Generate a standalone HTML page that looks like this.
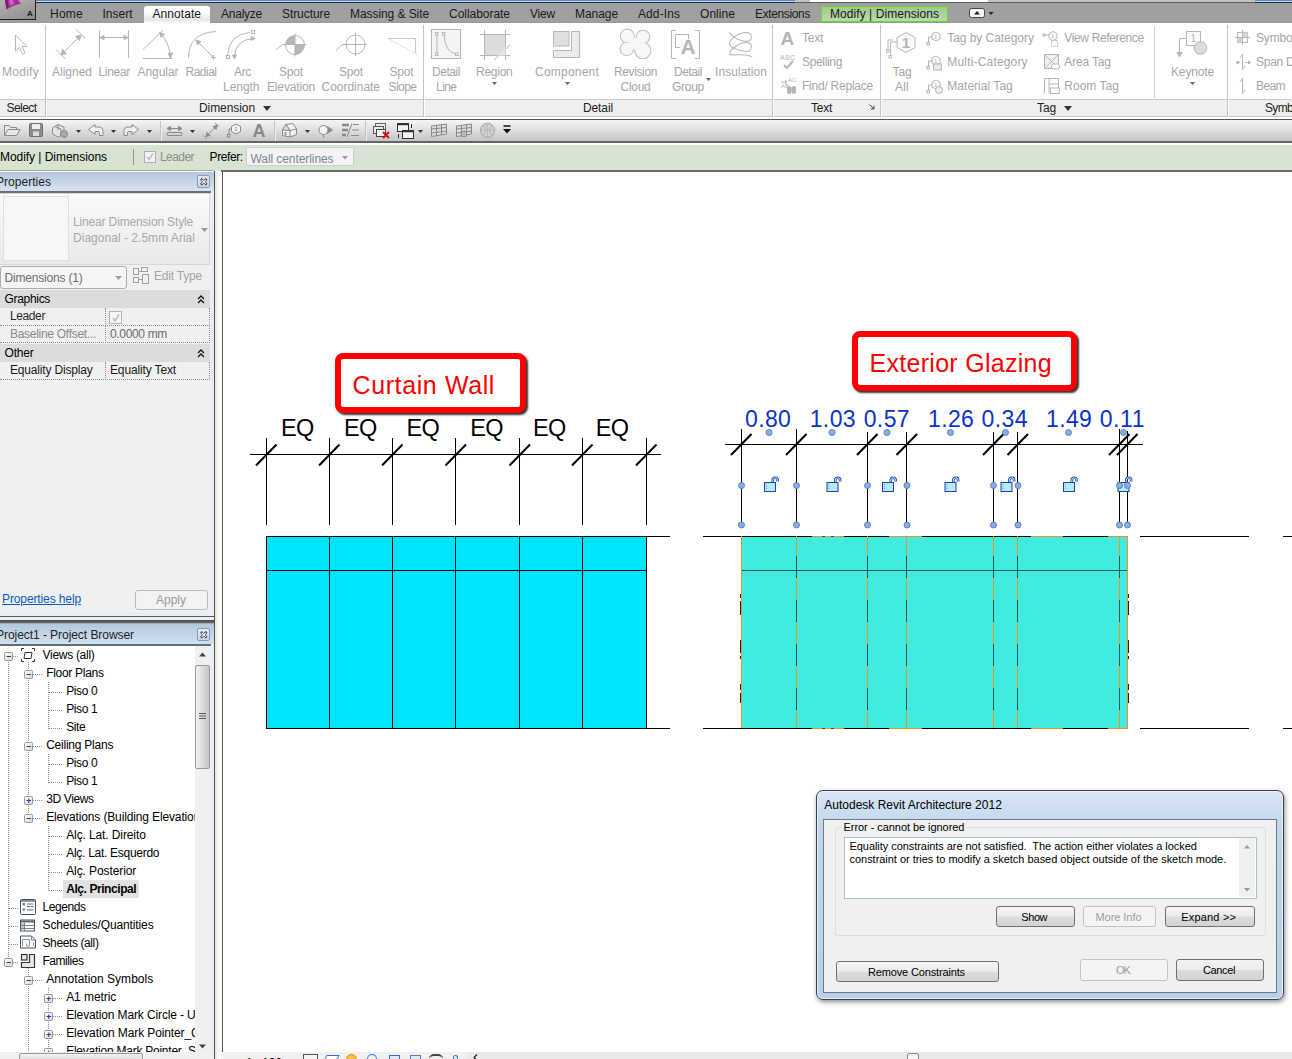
<!DOCTYPE html>
<html><head><meta charset="utf-8"><title>Revit</title>
<style>
html,body{margin:0;padding:0}
body{width:1292px;height:1059px;overflow:hidden;position:relative;background:#fff;font-family:"Liberation Sans",sans-serif;}
.r{position:absolute;display:block}
.t{position:absolute;white-space:nowrap;font-family:"Liberation Sans",sans-serif;}
</style></head><body>
<div class="r" style="left:0px;top:0px;width:795px;height:3px;background:linear-gradient(#5a7eb8 0,#6a8cc2 33%,#c6d8ee 34%,#c6d8ee 62%,#1c2c4c 70%);"></div>
<div class="r" style="left:795px;top:0px;width:460px;height:3px;background:linear-gradient(#c2c2c2 62%,#5e5e5e 70%);"></div>
<div class="r" style="left:810px;top:0px;width:178px;height:2.3px;background:#ffffff;"></div>
<div class="r" style="left:1255px;top:0px;width:37px;height:3px;background:linear-gradient(#5a7eb8 0,#6a8cc2 33%,#c6d8ee 34%,#c6d8ee 62%,#1c2c4c 70%);"></div>
<div class="r" style="left:0px;top:2.7px;width:1292px;height:20.3px;background:#a0a0a0;"></div>
<div class="r" style="left:0px;top:22px;width:1292px;height:1px;background:#9a9a9a;"></div>
<div class="r" style="left:0px;top:0px;width:36px;height:20px;background:linear-gradient(160deg,#b4b4b4,#8c8c8c);border-right:1.500px solid #222;border-bottom:1.500px solid #222;box-sizing:border-box;"></div>
<svg class="r" style="left:2px;top:0px;" width="22" height="12" viewBox="0 0 22 12"><path d="M3 0 L16 0 L19 3.500 L11 6 L4.500 9.500 Z" fill="#a82c9c"/><path d="M7 0 L8 5.500 L12 4 L11 0Z" fill="#cc5ec4"/><path d="M3 0 L4.500 9.500 L6.500 6 L5.500 0Z" fill="#7a1a72"/></svg>
<div class="t " style="left:27.0px;top:8.0px;font-size:8px;line-height:12px;color:#1a1a1a;font-weight:bold;">A</div>
<div class="r" style="left:0px;top:23px;width:1292px;height:76px;background:#ffffff;"></div>
<div class="r" style="left:0px;top:99px;width:1292px;height:18px;background:#efefef;border-top:1px solid #cacaca;border-bottom:1px solid #c6c6c6;box-sizing:border-box;"></div>
<div class="r" style="left:0px;top:117px;width:1292px;height:2px;background:#ffffff;"></div>
<div class="r" style="left:143.5px;top:6px;width:66.5px;height:17px;background:linear-gradient(#ffffff 0,#fcfcfc 40%,#e6e6e6 82%,#ffffff 100%);border-radius:3px 3px 0 0;"></div>
<div class="r" style="left:821px;top:6px;width:127px;height:16px;background:linear-gradient(#a4c694,#bbd8ad);border:1px solid #58e022;box-sizing:border-box;border-radius:2px;"></div>
<div class="t " style="left:50.0px;top:5.5px;font-size:12px;line-height:16px;color:#1a1a1a;letter-spacing:0.246px;">Home</div>
<div class="t " style="left:102.5px;top:5.5px;font-size:12px;line-height:16px;color:#1a1a1a;letter-spacing:0.000px;">Insert</div>
<div class="t " style="left:152.5px;top:5.5px;font-size:12px;line-height:16px;color:#1a1a1a;letter-spacing:0.061px;">Annotate</div>
<div class="t " style="left:221.0px;top:5.5px;font-size:12px;line-height:16px;color:#1a1a1a;letter-spacing:-0.241px;">Analyze</div>
<div class="t " style="left:282.0px;top:5.5px;font-size:12px;line-height:16px;color:#1a1a1a;letter-spacing:-0.075px;">Structure</div>
<div class="t " style="left:350.0px;top:5.5px;font-size:12px;line-height:16px;color:#1a1a1a;letter-spacing:-0.073px;">Massing &amp; Site</div>
<div class="t " style="left:449.0px;top:5.5px;font-size:12px;line-height:16px;color:#1a1a1a;letter-spacing:-0.034px;">Collaborate</div>
<div class="t " style="left:530.0px;top:5.5px;font-size:12px;line-height:16px;color:#1a1a1a;letter-spacing:-0.199px;">View</div>
<div class="t " style="left:575.0px;top:5.5px;font-size:12px;line-height:16px;color:#1a1a1a;letter-spacing:-0.060px;">Manage</div>
<div class="t " style="left:638.0px;top:5.5px;font-size:12px;line-height:16px;color:#1a1a1a;letter-spacing:0.094px;">Add-Ins</div>
<div class="t " style="left:700.0px;top:5.5px;font-size:12px;line-height:16px;color:#1a1a1a;letter-spacing:0.052px;">Online</div>
<div class="t " style="left:755.0px;top:5.5px;font-size:12px;line-height:16px;color:#1a1a1a;letter-spacing:-0.369px;">Extensions</div>
<div class="t " style="left:830.0px;top:5.5px;font-size:12px;line-height:16px;color:#1a1a1a;letter-spacing:0.062px;">Modify | Dimensions</div>
<svg class="r" style="left:969px;top:8px;" width="26" height="11" viewBox="0 0 26 11"><rect x="0.5" y="0.5" width="15" height="9" rx="2" fill="#f4f4f4" stroke="#444"/><path d="M5 6.5 L8 3 L11 6.5Z" fill="#222"/><path d="M19.5 4 L24.5 4 L22 7Z" fill="#222"/></svg>
<div class="r" style="left:45px;top:25px;width:1px;height:92px;background:#c4c4c4;"></div>
<div class="r" style="left:46px;top:25px;width:1px;height:92px;background:#ffffff;"></div>
<div class="r" style="left:423px;top:25px;width:1px;height:92px;background:#c4c4c4;"></div>
<div class="r" style="left:424px;top:25px;width:1px;height:92px;background:#ffffff;"></div>
<div class="r" style="left:772px;top:25px;width:1px;height:92px;background:#c4c4c4;"></div>
<div class="r" style="left:773px;top:25px;width:1px;height:92px;background:#ffffff;"></div>
<div class="r" style="left:880px;top:25px;width:1px;height:92px;background:#c4c4c4;"></div>
<div class="r" style="left:881px;top:25px;width:1px;height:92px;background:#ffffff;"></div>
<div class="r" style="left:1227px;top:25px;width:1px;height:92px;background:#c4c4c4;"></div>
<div class="r" style="left:1228px;top:25px;width:1px;height:92px;background:#ffffff;"></div>
<div class="t " style="left:6.5px;top:99.5px;font-size:12px;line-height:16px;color:#222;letter-spacing:-0.557px;">Select</div>
<div class="t " style="left:199.0px;top:99.5px;font-size:12px;line-height:16px;color:#222;letter-spacing:-0.078px;">Dimension</div>
<svg class="r" style="left:262.5px;top:105.5px;" width="9" height="6" viewBox="0 0 9 6"><path d="M0 0 L8 0 L4 5Z" fill="#333"/></svg>
<div class="t " style="left:583.0px;top:99.5px;font-size:12px;line-height:16px;color:#222;letter-spacing:-0.115px;">Detail</div>
<div class="t " style="left:811.0px;top:99.5px;font-size:12px;line-height:16px;color:#222;letter-spacing:-0.250px;">Text</div>
<svg class="r" style="left:869px;top:104px;" width="7" height="7" viewBox="0 0 7 7"><path d="M0.5 0.5 L5 5 M5 1.5 L5 5 L1.5 5" stroke="#444" fill="none"/></svg>
<div class="t " style="left:1037.0px;top:99.5px;font-size:12px;line-height:16px;color:#222;letter-spacing:-0.115px;">Tag</div>
<svg class="r" style="left:1063.5px;top:105.5px;" width="9" height="6" viewBox="0 0 9 6"><path d="M0 0 L8 0 L4 5Z" fill="#333"/></svg>
<div class="t " style="left:1265.0px;top:99.5px;font-size:12px;line-height:16px;color:#222;letter-spacing:-0.669px;">Symbol</div>
<div class="t " style="left:2.0px;top:63.5px;font-size:12px;line-height:16px;color:#a6a6a6;letter-spacing:0.276px;">Modify</div>
<div class="t " style="left:52.0px;top:63.5px;font-size:12px;line-height:16px;color:#a6a6a6;letter-spacing:-0.004px;">Aligned</div>
<div class="t " style="left:98.5px;top:63.5px;font-size:12px;line-height:16px;color:#a6a6a6;letter-spacing:-0.310px;">Linear</div>
<div class="t " style="left:137.5px;top:63.5px;font-size:12px;line-height:16px;color:#a6a6a6;letter-spacing:-0.051px;">Angular</div>
<div class="t " style="left:185.5px;top:63.5px;font-size:12px;line-height:16px;color:#a6a6a6;letter-spacing:-0.505px;">Radial</div>
<div class="t " style="left:234.0px;top:63.5px;font-size:12px;line-height:16px;color:#a6a6a6;letter-spacing:-0.333px;">Arc</div>
<div class="t " style="left:223.0px;top:78.5px;font-size:12px;line-height:16px;color:#a6a6a6;letter-spacing:-0.031px;">Length</div>
<div class="t " style="left:279.0px;top:63.5px;font-size:12px;line-height:16px;color:#a6a6a6;letter-spacing:-0.168px;">Spot</div>
<div class="t " style="left:267.0px;top:78.5px;font-size:12px;line-height:16px;color:#a6a6a6;letter-spacing:-0.151px;">Elevation</div>
<div class="t " style="left:339.0px;top:63.5px;font-size:12px;line-height:16px;color:#a6a6a6;letter-spacing:-0.168px;">Spot</div>
<div class="t " style="left:321.5px;top:78.5px;font-size:12px;line-height:16px;color:#a6a6a6;letter-spacing:-0.020px;">Coordinate</div>
<div class="t " style="left:389.5px;top:63.5px;font-size:12px;line-height:16px;color:#a6a6a6;letter-spacing:-0.168px;">Spot</div>
<div class="t " style="left:388.5px;top:78.5px;font-size:12px;line-height:16px;color:#a6a6a6;letter-spacing:-0.537px;">Slope</div>
<div class="t " style="left:432.0px;top:63.5px;font-size:12px;line-height:16px;color:#a6a6a6;letter-spacing:-0.448px;">Detail</div>
<div class="t " style="left:436.0px;top:78.5px;font-size:12px;line-height:16px;color:#a6a6a6;letter-spacing:-0.547px;">Line</div>
<div class="t " style="left:476.0px;top:63.5px;font-size:12px;line-height:16px;color:#a6a6a6;letter-spacing:-0.255px;">Region</div>
<div class="t " style="left:535.0px;top:63.5px;font-size:12px;line-height:16px;color:#a6a6a6;letter-spacing:0.219px;">Component</div>
<div class="t " style="left:614.0px;top:63.5px;font-size:12px;line-height:16px;color:#a6a6a6;letter-spacing:-0.379px;">Revision</div>
<div class="t " style="left:620.5px;top:78.5px;font-size:12px;line-height:16px;color:#a6a6a6;letter-spacing:-0.272px;">Cloud</div>
<div class="t " style="left:674.0px;top:63.5px;font-size:12px;line-height:16px;color:#a6a6a6;letter-spacing:-0.448px;">Detail</div>
<div class="t " style="left:672.0px;top:78.5px;font-size:12px;line-height:16px;color:#a6a6a6;letter-spacing:-0.269px;">Group</div>
<div class="t " style="left:715.0px;top:63.5px;font-size:12px;line-height:16px;color:#a6a6a6;letter-spacing:0.064px;">Insulation</div>
<div class="t " style="left:892.5px;top:63.5px;font-size:12px;line-height:16px;color:#a6a6a6;letter-spacing:-0.115px;">Tag</div>
<div class="t " style="left:895.0px;top:78.5px;font-size:12px;line-height:16px;color:#a6a6a6;letter-spacing:0.219px;">All</div>
<div class="t " style="left:1171.0px;top:63.5px;font-size:12px;line-height:16px;color:#a6a6a6;letter-spacing:-0.145px;">Keynote</div>
<div class="t " style="left:802.0px;top:30.3px;font-size:12px;line-height:16px;color:#a6a6a6;letter-spacing:-0.250px;">Text</div>
<div class="t " style="left:802.0px;top:54.3px;font-size:12px;line-height:16px;color:#a6a6a6;letter-spacing:-0.338px;">Spelling</div>
<div class="t " style="left:802.0px;top:78.3px;font-size:12px;line-height:16px;color:#a6a6a6;letter-spacing:-0.233px;">Find/ Replace</div>
<div class="t " style="left:947.3px;top:30.3px;font-size:12px;line-height:16px;color:#a6a6a6;letter-spacing:-0.057px;">Tag by Category</div>
<div class="t " style="left:947.3px;top:54.3px;font-size:12px;line-height:16px;color:#a6a6a6;letter-spacing:0.176px;">Multi-Category</div>
<div class="t " style="left:947.3px;top:78.3px;font-size:12px;line-height:16px;color:#a6a6a6;letter-spacing:0.030px;">Material Tag</div>
<div class="t " style="left:1064.3px;top:30.3px;font-size:12px;line-height:16px;color:#a6a6a6;letter-spacing:-0.356px;">View Reference</div>
<div class="t " style="left:1064.3px;top:54.3px;font-size:12px;line-height:16px;color:#a6a6a6;letter-spacing:-0.162px;">Area Tag</div>
<div class="t " style="left:1064.3px;top:78.3px;font-size:12px;line-height:16px;color:#a6a6a6;letter-spacing:0.004px;">Room Tag</div>
<div class="t " style="left:1256.0px;top:30.3px;font-size:12px;line-height:16px;color:#a6a6a6;letter-spacing:-0.169px;">Symbol</div>
<div class="t " style="left:1256.0px;top:54.3px;font-size:12px;line-height:16px;color:#a6a6a6;letter-spacing:-0.265px;">Span Direction</div>
<div class="t " style="left:1256.0px;top:78.3px;font-size:12px;line-height:16px;color:#a6a6a6;letter-spacing:-0.586px;">Beam</div>
<svg class="r" style="left:491.5px;top:81.5px;" width="6" height="4" viewBox="0 0 6 4"><path d="M0 0 L5 0 L2.500 3Z" fill="#666"/></svg>
<svg class="r" style="left:564.5px;top:81.5px;" width="6" height="4" viewBox="0 0 6 4"><path d="M0 0 L5 0 L2.500 3Z" fill="#666"/></svg>
<svg class="r" style="left:705.5px;top:77.5px;" width="6" height="4" viewBox="0 0 6 4"><path d="M0 0 L5 0 L2.500 3Z" fill="#666"/></svg>
<svg class="r" style="left:1189.5px;top:81.5px;" width="6" height="4" viewBox="0 0 6 4"><path d="M0 0 L5 0 L2.500 3Z" fill="#666"/></svg>
<div class="r" style="left:1154px;top:26px;width:1px;height:71.5px;background:#d4d4d4;"></div>
<svg class="r" style="left:0;top:0" width="1292" height="120" viewBox="0 0 1292 120" fill="none" stroke="#b6b6b6" stroke-width="1"><path d="M15.5 35 L15.5 51 L19.5 47.5 L22.5 54 L25 53 L22 46.5 L27 46.5 Z" fill="#fff"/><path d="M62 54 L80 36"/><path d="M56 49.5 L65.5 59 M76 29.5 L85.5 38.5"/><path d="M61 55 L62.5 49.5 L66.5 53.5Z M81 35 L75.5 36.5 L79.5 40.5Z" fill="#b6b6b6"/><path d="M99.5 30.5 V58 M128.5 30.5 V58 M100 37.5 H128"/><path d="M100 37.5 L104 35.5 V39.5Z M128 37.5 L124 35.5 V39.5Z" fill="#b6b6b6"/><path d="M143 58.5 H172.5 M143 49.5 L162.5 30.5 M160.5 33.5 Q169 42 170.5 57"/><path d="M159.5 32.5 L164.5 34 L161 37.5Z M170.5 58 L168 53.5 L172.5 53Z" fill="#b6b6b6"/><path d="M188.5 58 Q188.5 33 216 31.5 M197 41 L213.5 57.5 M211 57.5 H216 M213.5 55 V60"/><path d="M196 40 L201 41.5 L197.5 45Z" fill="#b6b6b6"/><path d="M234.5 57 Q235 40 253 38.5 M227.5 55 Q229 34 250 32.5"/><rect x="226.5" y="55.5" width="3" height="3" fill="#fff"/><rect x="251.500" y="30.500" width="3" height="3" fill="#fff"/><path d="M234.500 59 L232.500 55 H236.500Z M255 38.5 L251 36.500 V40.500Z" fill="#b6b6b6"/><circle cx="295" cy="45" r="9.5"/><path d="M295 45 V35.500 A9.5 9.5 0 0 0 285.500 45Z M295 45 V54.500 A9.5 9.5 0 0 0 304.500 45Z" fill="#b6b6b6" stroke="none"/><path d="M276 50 L282.500 44.5 H306.500 M295 33.500 V56.500"/><circle cx="355.500" cy="44.5" r="9.5"/><path d="M336 50.500 L342.500 44.5 H366.500 M355.500 33 V56"/><path d="M388 38.500 H415.500 V53.500" stroke="#c8c8c8"/><path d="M388 38.500 L417 54.500" stroke-dasharray="1 1" stroke="#c8c8c8"/><rect x="431.500" y="29.500" width="29" height="29" fill="#f4f4f4"/><path d="M437 34 V54 M444 34 Q445 53 456.500 54"/><rect x="435.500" y="32.500" width="2.500" height="2.500" fill="#fff"/><rect x="435.500" y="53" width="2.500" height="2.500" fill="#fff"/><rect x="442.500" y="32.500" width="2.500" height="2.500" fill="#fff"/><rect x="455.500" y="53" width="2.500" height="2.500" fill="#fff"/><rect x="484.500" y="34.500" width="21" height="21" fill="#dcdcdc" stroke="none"/><path d="M484.500 30 V60 M505.500 30 V60 M480 34.500 H510 M480 55.500 H510 M494 60 L510 45"/><path d="M497 55.500 H505.500 V47Z" fill="#e6e6e6" stroke="none"/><path d="M571.500 31.500 H579.500 V57.500 H553.500 V50.500 H571.500Z" fill="#ececec"/><rect x="553.500" y="31.500" width="15.500" height="14.500" fill="#e0e0e0"/><circle cx="627.3" cy="36" r="6.5" stroke="#bdbdbd" stroke-width="2" fill="none"/><circle cx="642.8" cy="37" r="6.3" stroke="#bdbdbd" stroke-width="2" fill="none"/><circle cx="626.8" cy="48.8" r="6.3" stroke="#bdbdbd" stroke-width="2" fill="none"/><circle cx="642.8" cy="50.6" r="7.6" stroke="#bdbdbd" stroke-width="2" fill="none"/><circle cx="627.3" cy="36" r="6.5" stroke="none" fill="#f7f7f7"/><circle cx="642.8" cy="37" r="6.3" stroke="none" fill="#f7f7f7"/><circle cx="626.8" cy="48.8" r="6.3" stroke="none" fill="#f7f7f7"/><circle cx="642.8" cy="50.6" r="7.6" stroke="none" fill="#f7f7f7"/><circle cx="634.5" cy="43.5" r="6" stroke="none" fill="#f7f7f7"/><path d="M676 30.500 H671.500 V58.500 H676 M695 30.500 H699.500 V58.500 H695"/><rect x="675.500" y="34.500" width="13" height="13"/><g transform="translate(610 24) scale(0.12384)" stroke-width="8.500"><path d="M962 68 C 1000 120, 1060 140, 1100 140 C 1155 140, 1155 68, 1100 68 C 1040 68, 975 120, 965 150 C 955 185, 1050 222, 1100 222 C 1155 222, 1155 150, 1100 150 C 1040 150, 975 205, 965 235 C 955 270, 1100 225, 1145 265"/></g><path d="M784 65 L787 68 L793 61" stroke-width="2"/><rect x="787.500" y="86.500" width="3.500" height="7" rx="1.500" fill="#b6b6b6"/><rect x="792" y="86.500" width="3.500" height="7" rx="1.500" fill="#b6b6b6"/><path d="M781 82 H787 M785 80 L787 82 L785 84"/><path d="M906 32.500 L915 37.500 V47.500 L906 52.500 L897 47.500 V37.500Z" fill="#fafafa"/><path d="M897 42 H890.500 V56 M893 40 H888 V50"/><rect x="889" y="55.500" width="2.500" height="2.500"/><rect x="886.500" y="49.500" width="2.500" height="2.500"/><path d="M936 32 L940 34 V39 L936 41 L932 39 V34 Z" fill="#fafafa"/><path d="M932 37 H928.500 V43"/><rect x="927" y="42.5" width="2.500" height="2.500"/><path d="M936 56 L940 58 V63 L936 65 L932 63 V58 Z" fill="#fafafa"/><path d="M932 61 H928.500 V67"/><rect x="927" y="66.5" width="2.500" height="2.500"/><path d="M936 80 L940 82 V87 L936 89 L932 87 V82 Z" fill="#fafafa"/><path d="M932 85 H928.500 V91"/><rect x="927" y="90.5" width="2.500" height="2.500"/><rect x="933.500" y="64" width="8" height="6" fill="#e8e8e8"/><circle cx="939" cy="90" r="3.500" fill="#eee"/><path d="M1053 31.500 L1057 33.500 V38.500 L1053 40.500 L1049 38.500 V33.500Z" fill="#fafafa"/><path d="M1049 35 H1045"/><rect x="1043" y="34" width="2" height="2"/><rect x="1051.500" y="40.500" width="6" height="6" stroke-dasharray="2 1.5"/><rect x="1044.500" y="54.500" width="14" height="14" fill="#f0f0f0"/><path d="M1044.500 54.500 L1058.500 68.500 M1058.500 54.500 L1044.500 68.500"/><rect x="1051.500" y="64" width="8" height="5" rx="2" fill="#fff"/><path d="M1044.500 93.500 V78.500 H1058.500 V93.500 M1049 93.500 V78.500 M1049 84 H1058.500"/><rect x="1050.500" y="88" width="9" height="5.500" fill="#fff"/><rect x="1186.500" y="31.500" width="14" height="14" fill="#fdfdfd"/><path d="M1186.500 38.500 H1179.500 V54"/><path d="M1179.500 57 L1177 52.500 H1182Z" fill="#b6b6b6"/><circle cx="1200.500" cy="48" r="6.300" fill="#dcdcdc"/><rect x="1237.500" y="32.500" width="10" height="10" fill="#fbfbfb"/><rect x="1242.500" y="32.500" width="5" height="5" fill="#d6d6d6" stroke="none"/><rect x="1237.500" y="37.500" width="5" height="5" fill="#d6d6d6" stroke="none"/><path d="M1235 37.500 H1250 M1242.500 30 V45"/><path d="M1242.500 54.500 V69.500 M1236 62.500 H1240 M1245 62.500 H1250 M1240 58 L1242.500 54.500 M1245 66 L1242.500 69.500"/><path d="M1236 62.500 L1238 61 V64Z M1250.500 62.500 L1248.500 61 V64Z" fill="#b6b6b6"/><path d="M1242.500 78.500 V93.500 M1240 82 L1242.500 78.500 M1245 90 L1242.500 93.500"/></svg>
<div class="r" style="left:680px;top:39px;width:16px;height:16px;background:#fbfbfb;"></div>
<div class="t " style="left:680.7px;top:34.8px;font-size:20.5px;line-height:24.5px;color:#b6b6b6;font-weight:bold;">A</div>
<div class="t " style="left:780.5px;top:26.5px;font-size:19px;line-height:23px;color:#b6b6b6;font-weight:bold;">A</div>
<div class="t " style="left:780.0px;top:52.0px;font-size:7px;line-height:11px;color:#b6b6b6;letter-spacing:0.5px;">ABC</div>
<div class="t " style="left:781.0px;top:81.0px;font-size:6px;line-height:10px;color:#b6b6b6;">AB</div>
<div class="t " style="left:788.0px;top:74.5px;font-size:6px;line-height:10px;color:#b6b6b6;">AC</div>
<div class="t " style="left:901.8px;top:33.0px;font-size:15px;line-height:19px;color:#b6b6b6;font-weight:bold;">1</div>
<div class="t " style="left:1190.5px;top:31.5px;font-size:10px;line-height:14px;color:#b6b6b6;">1</div>
<div class="t " style="left:934.0px;top:31.5px;font-size:6px;line-height:10px;color:#b6b6b6;">1</div>
<div class="t " style="left:934.0px;top:55.5px;font-size:6px;line-height:10px;color:#b6b6b6;">1</div>
<div class="t " style="left:934.0px;top:79.5px;font-size:6px;line-height:10px;color:#b6b6b6;">1</div>
<div class="t " style="left:1051.0px;top:30.5px;font-size:6px;line-height:10px;color:#b6b6b6;">1</div>
<div class="r" style="left:0px;top:118.5px;width:1292px;height:23px;background:linear-gradient(#f6f6f6,#e2e2e2 40%,#c2c2c2);border-top:1.200px solid #555;box-sizing:border-box;"></div>
<div class="r" style="left:0px;top:141.4px;width:1292px;height:2px;background:#646464;"></div>
<svg class="r" style="left:0;top:0" width="1292" height="145" viewBox="0 0 1292 145" fill="none" stroke="#8a8a8a" stroke-width="1"><path d="M4.500 135.500 V125.500 H9 L10.500 127.500 H16.500 V129.500 M4.500 135.500 L8 129.500 H20 L16.500 135.500Z" fill="#e8e8e8"/><rect x="29.500" y="123.500" width="13" height="13" rx="1" fill="#8c8c8c" stroke="#6e6e6e"/><rect x="32" y="124" width="8" height="5" fill="#eee" stroke="none"/><rect x="33" y="131.500" width="6" height="4.500" fill="#ddd" stroke="none"/><path d="M52.500 128 L58 124.500 L64 127 V134 L58 137 L52.500 134Z M58 124.500 V130 M55 126.500 L61 129 V135.500" fill="#e4e4e4"/><circle cx="64" cy="134" r="3.500" fill="#aaa"/><path d="M88.500 129.500 L95 124.500 V127 H99 Q103 127 103 131.500 V135.500 H99.500 V132.500 Q99.500 131.500 98 131.500 H95 V134.500 Z" fill="#f0f0f0"/><path d="M138.500 129.500 L132 124.500 V127 H128 Q124 127 124 131.500 V135.500 H127.500 V132.500 Q127.500 131.500 129 131.500 H132 V134.500 Z" fill="#f0f0f0"/><path d="M168 128.500 H181"/><path d="M167 128.500 L170.500 126.500 V130.500Z M182 128.500 L178.500 126.500 V130.500Z" fill="#8a8a8a"/><rect x="167" y="132.500" width="15" height="3" rx="1" fill="#d4d4d4"/><path d="M207 135.500 L216 126.500 M203.500 135.500 L207 139 M215 123 L219 126.500"/><path d="M206 136.500 L207 132.500 L210 135.500Z M217 125.500 L213 126.500 L216 129.500Z" fill="#8a8a8a"/><path d="M236 124 L240.500 126.500 V131.500 L236 134 L231.500 131.500 V126.500Z" fill="#f4f4f4"/><path d="M231.500 129 H229 V135"/><rect x="227.500" y="134.500" width="2.500" height="2.500" fill="#eee"/><path d="M282.500 130 L286 124.500 L293 123.500 L296.500 129 V134.500 L290 137 L282.500 135.500 Z" fill="#f2f2f2"/><path d="M286 124.500 L290 130.500 V137 M290 130.500 L296.500 129" /><path d="M282.500 130 L286 124.500 L290 130.500Z" fill="#e0e0e0"/><rect x="284.500" y="132" width="2" height="3.500" fill="#999" stroke="none"/><path d="M327 126.500 L332.500 130 L327 133.500Z" fill="#8a8a8a"/><circle cx="323.500" cy="130" r="4.500" fill="#f4f4f4"/><path d="M323.500 134.500 V137.500"/><path d="M342 125 H349 M342 130 H348 M342 135 H346" stroke-width="2.500"/><path d="M353 124.500 H359 M352 130 H359 M351 135.500 H359 M352 123.500 L347 137"/><rect x="375.500" y="123.500" width="10" height="7" fill="#ececec" stroke="#666"/><rect x="373.500" y="126.500" width="10" height="7" fill="#ececec" stroke="#555"/><rect x="376.500" y="129.500" width="9" height="7" fill="#f4f4f4" stroke="#444"/><path d="M383 132 L389 138 M389 132 L383 138" stroke="#d01010" stroke-width="2"/><rect x="397.500" y="123.500" width="11" height="8" fill="#f4f4f4" stroke="#333"/><rect x="402.500" y="130.500" width="11" height="8" fill="#f4f4f4" stroke="#333"/><path d="M397.500 124.500 H408.500 M402.500 131.500 H413.500" stroke="#333" stroke-width="1.500"/><path d="M411.500 128 V124 M398.500 134 V138" stroke="#333"/><path d="M431.5 126 L446.5 124 V134 L431.5 136.500Z M436.5 125 V135.500 M441.5 124.500 V135 M431.5 129 L446.5 127.500 M431.5 133 L446.5 131" fill="#ddd"/><path d="M456.5 126 L471.5 124 V134 L456.5 136.500Z M461.5 125 V135.500 M466.5 124.500 V135 M456.5 129 L471.5 127.500 M456.5 133 L471.5 131" fill="#ddd"/><circle cx="464" cy="134" r="3" fill="#bbb"/><circle cx="487.500" cy="130.300" r="7" fill="#d2d2d2" stroke="#a4a4a4"/><path d="M481 130 H494 M487.500 123.500 V137 M483 125 Q488 130 483 135.500 M492 125 Q487 130 492 135.500" stroke="#b8b8b8"/></svg>
<svg class="r" style="left:75.5px;top:129.5px;" width="6" height="4" viewBox="0 0 6 4"><path d="M0 0 H5 L2.500 3Z" fill="#333"/></svg>
<svg class="r" style="left:111px;top:129.5px;" width="6" height="4" viewBox="0 0 6 4"><path d="M0 0 H5 L2.500 3Z" fill="#333"/></svg>
<svg class="r" style="left:147px;top:129.5px;" width="6" height="4" viewBox="0 0 6 4"><path d="M0 0 H5 L2.500 3Z" fill="#333"/></svg>
<svg class="r" style="left:190px;top:129.5px;" width="6" height="4" viewBox="0 0 6 4"><path d="M0 0 H5 L2.500 3Z" fill="#333"/></svg>
<svg class="r" style="left:304.5px;top:129.5px;" width="6" height="4" viewBox="0 0 6 4"><path d="M0 0 H5 L2.500 3Z" fill="#333"/></svg>
<svg class="r" style="left:417.5px;top:129.5px;" width="6" height="4" viewBox="0 0 6 4"><path d="M0 0 H5 L2.500 3Z" fill="#333"/></svg>
<svg class="r" style="left:503px;top:125px;" width="9" height="9" viewBox="0 0 9 9"><path d="M0.500 1 H7.500" stroke="#111" stroke-width="1.500"/><path d="M0 4 H8 L4 8.500Z" fill="#111"/></svg>
<div class="r" style="left:160px;top:121px;width:1px;height:20px;background:#c4c4c4;"></div>
<div class="r" style="left:161px;top:121px;width:1px;height:20px;background:#ebebeb;"></div>
<div class="r" style="left:274px;top:121px;width:1px;height:20px;background:#c4c4c4;"></div>
<div class="r" style="left:275px;top:121px;width:1px;height:20px;background:#ebebeb;"></div>
<div class="r" style="left:365px;top:121px;width:1px;height:20px;background:#c4c4c4;"></div>
<div class="r" style="left:366px;top:121px;width:1px;height:20px;background:#ebebeb;"></div>
<div class="t " style="left:252.5px;top:119.5px;font-size:18px;line-height:22px;color:#888;font-weight:bold;">A</div>
<div class="t " style="left:234.3px;top:123.7px;font-size:6px;line-height:10px;color:#777;">1</div>
<div class="r" style="left:0px;top:143.4px;width:1292px;height:1.6px;background:#fbfdfa;"></div>
<div class="r" style="left:0px;top:145px;width:1292px;height:25.5px;background:#d7e4d2;"></div>
<div class="t " style="left:0.0px;top:148.8px;font-size:12px;line-height:16px;color:#000;letter-spacing:-0.044px;">Modify | Dimensions</div>
<div class="r" style="left:133px;top:148.5px;width:1px;height:16.5px;background:#8d9a88;"></div>
<div class="r" style="left:143.5px;top:150.5px;width:12.5px;height:12.5px;background:#f3f3f3;border:1px solid #a8b0b8;box-sizing:border-box;"></div>
<svg class="r" style="left:145px;top:152px;" width="10" height="10" viewBox="0 0 10 10"><path d="M2 5 L4 7.500 L8 1.500" stroke="#c0c0c0" stroke-width="1.500" fill="none"/></svg>
<div class="t " style="left:160.0px;top:148.8px;font-size:12px;line-height:16px;color:#8c8c8c;letter-spacing:-0.560px;">Leader</div>
<div class="t " style="left:209.6px;top:148.8px;font-size:12px;line-height:16px;color:#000;letter-spacing:-0.429px;">Prefer:</div>
<div class="r" style="left:246px;top:147px;width:108px;height:18.5px;background:#f3f3f3;border:1.500px solid #ccd0d4;box-sizing:border-box;"></div>
<div class="t " style="left:250.5px;top:150.5px;font-size:12px;line-height:16px;color:#7d8590;letter-spacing:-0.079px;">Wall centerlines</div>
<svg class="r" style="left:342px;top:156px;" width="7" height="4" viewBox="0 0 7 4"><path d="M0 0 H6 L3 3.500Z" fill="#9a9a9a"/></svg>
<div class="r" style="left:0px;top:170.5px;width:222px;height:890px;background:#f0f0f0;"></div>
<div class="r" style="left:213.8px;top:171px;width:1.3px;height:888px;background:#505050;"></div>
<div class="r" style="left:215px;top:171px;width:6px;height:888px;background:linear-gradient(90deg,#dfe9d9,#f4f7f1 45%,#ffffff);"></div>
<div class="r" style="left:221px;top:170px;width:1071px;height:2px;background:#6a6a6a;"></div>
<div class="r" style="left:221.5px;top:171px;width:1.5px;height:881px;background:#5e5e5e;"></div>
<div class="r" style="left:223px;top:172px;width:1069px;height:880px;background:#ffffff;"></div>
<div class="r" style="left:0px;top:171px;width:214px;height:445px;background:#e7eef8;"></div>
<div class="r" style="left:0px;top:170px;width:214px;height:0.8px;background:#a8a8a8;"></div>
<div class="r" style="left:0px;top:170.8px;width:214px;height:1.4px;background:#ffffff;"></div>
<div class="r" style="left:0px;top:172.2px;width:214px;height:19px;background:linear-gradient(#b6c8de,#d6e3f1);"></div>
<div class="r" style="left:0px;top:191px;width:211px;height:1.5px;background:#6e6e6e;"></div>
<div class="t " style="left:-4.0px;top:173.5px;font-size:12px;line-height:16px;color:#1e1e1e;letter-spacing:0.031px;">Properties</div>
<div class="r" style="left:197px;top:175px;width:13px;height:13px;background:linear-gradient(#e6edf7,#c6d4e8);border:1px solid #8a9ab8;box-sizing:border-box;border-radius:2px;"></div>
<svg class="r" style="left:200px;top:178px;" width="8" height="8" viewBox="0 0 8 8"><path d="M1.800 1.800 L5.700 5.700 M5.700 1.800 L1.800 5.700" stroke="#3a3a3a" stroke-width="2.500" stroke-linecap="square"/><path d="M1.600 1.600 L5.900 5.900 M5.900 1.600 L1.600 5.900" stroke="#ffffff" stroke-width="1.250"/></svg>
<div class="r" style="left:0px;top:192.5px;width:211px;height:419.5px;background:#f0f0f0;"></div>
<div class="r" style="left:0px;top:193px;width:209.5px;height:72px;background:linear-gradient(#fafafa,#e9e9e9);border:1px solid #d6d6d6;border-left:none;box-sizing:border-box;"></div>
<div class="r" style="left:3px;top:196px;width:66px;height:65px;background:#f7f7f7;border:1px solid #e0e0e0;box-sizing:border-box;"></div>
<div class="t " style="left:73.0px;top:214.0px;font-size:12px;line-height:16px;color:#a8a8a8;letter-spacing:-0.154px;">Linear Dimension Style</div>
<div class="t " style="left:73.0px;top:230.0px;font-size:12px;line-height:16px;color:#a8a8a8;letter-spacing:0.028px;">Diagonal - 2.5mm Arial</div>
<svg class="r" style="left:200.5px;top:227.5px;" width="8" height="5" viewBox="0 0 8 5"><path d="M0 0 H7 L3.500 4Z" fill="#9a9a9a"/></svg>
<div class="r" style="left:0px;top:266px;width:126.5px;height:22.5px;background:#f5f5f5;border:1px solid #adadad;box-sizing:border-box;border-radius:3px;"></div>
<div class="t " style="left:4.5px;top:269.5px;font-size:12px;line-height:16px;color:#6e6e6e;letter-spacing:-0.193px;">Dimensions (1)</div>
<svg class="r" style="left:114.5px;top:276px;" width="8" height="5" viewBox="0 0 8 5"><path d="M0 0 H7 L3.500 4Z" fill="#a0a0a0"/></svg>
<svg class="r" style="left:132px;top:267px;" width="18" height="18" viewBox="0 0 18 18"><g fill="none" stroke="#a0a0a0"><rect x="1.500" y="1.500" width="5" height="6"/><rect x="9.500" y="0.500" width="6" height="4"/><rect x="1.500" y="10.500" width="5" height="5"/><rect x="10.500" y="7.500" width="6" height="9"/><path d="M6.500 4.500 H9.500 M6.500 12.500 H10.500"/></g></svg>
<div class="t " style="left:154.0px;top:268.0px;font-size:12px;line-height:16px;color:#a4a4a4;letter-spacing:-0.200px;">Edit Type</div>
<div class="r" style="left:0px;top:290px;width:210px;height:18px;background:#dcdcdc;"></div>
<div class="t " style="left:4.5px;top:290.5px;font-size:12px;line-height:16px;color:#000;letter-spacing:-0.314px;">Graphics</div>
<svg class="r" style="left:196.5px;top:294.5px;" width="8" height="9" viewBox="0 0 8 9"><path d="M1 4 L4 1 L7 4 M1 8 L4 5 L7 8" stroke="#111" stroke-width="1.300" fill="none"/></svg>
<div class="r" style="left:0px;top:344px;width:210px;height:18px;background:#dcdcdc;"></div>
<div class="t " style="left:4.5px;top:344.5px;font-size:12px;line-height:16px;color:#000;letter-spacing:-0.200px;">Other</div>
<svg class="r" style="left:196.5px;top:348.5px;" width="8" height="9" viewBox="0 0 8 9"><path d="M1 4 L4 1 L7 4 M1 8 L4 5 L7 8" stroke="#111" stroke-width="1.300" fill="none"/></svg>
<div class="r" style="left:0px;top:308px;width:209.5px;height:18px;border-bottom:1px dotted #8c8c8c;border-right:1px dotted #8c8c8c;box-sizing:border-box;"></div>
<div class="r" style="left:105px;top:308px;width:1px;height:18px;border-left:1px dotted #8c8c8c;"></div>
<div class="t " style="left:10.0px;top:308.0px;font-size:12px;line-height:16px;color:#2a2a2a;letter-spacing:-0.393px;">Leader</div>
<div class="r" style="left:0px;top:326px;width:209.5px;height:17px;border-bottom:1px dotted #8c8c8c;border-right:1px dotted #8c8c8c;box-sizing:border-box;"></div>
<div class="r" style="left:105px;top:326px;width:1px;height:17px;border-left:1px dotted #8c8c8c;"></div>
<div class="t " style="left:10.0px;top:325.5px;font-size:12px;line-height:16px;color:#8a8a8a;letter-spacing:-0.284px;">Baseline Offset...</div>
<div class="t " style="left:110.0px;top:325.5px;font-size:12px;line-height:16px;color:#6c6c6c;letter-spacing:-0.335px;">0.0000 mm</div>
<div class="r" style="left:0px;top:362px;width:209.5px;height:18px;border-bottom:1px dotted #8c8c8c;border-right:1px dotted #8c8c8c;box-sizing:border-box;"></div>
<div class="r" style="left:105px;top:362px;width:1px;height:18px;border-left:1px dotted #8c8c8c;"></div>
<div class="t " style="left:10.0px;top:362.0px;font-size:12px;line-height:16px;color:#1a1a1a;letter-spacing:-0.180px;">Equality Display</div>
<div class="t " style="left:110.0px;top:362.0px;font-size:12px;line-height:16px;color:#1a1a1a;letter-spacing:-0.138px;">Equality Text</div>
<div class="r" style="left:109px;top:311px;width:13px;height:13px;background:#f6f6f6;border:1px solid #b4b4b4;box-sizing:border-box;"></div>
<svg class="r" style="left:110.5px;top:312.5px;" width="10" height="10" viewBox="0 0 10 10"><path d="M2 5 L4 8 L8 1.500" stroke="#bdbdbd" stroke-width="1.500" fill="none"/></svg>
<div class="t " style="left:2.0px;top:590.5px;font-size:12px;line-height:16px;color:#0a5bc4;letter-spacing:-0.114px;text-decoration:underline;">Properties help</div>
<div class="r" style="left:135px;top:589.5px;width:72.5px;height:20px;background:#f3f3f3;border:1px solid #b9b9b9;box-sizing:border-box;border-radius:3px;"></div>
<div class="t " style="left:156.0px;top:591.5px;font-size:12px;line-height:16px;color:#9a9a9a;letter-spacing:-0.003px;">Apply</div>
<div class="r" style="left:0px;top:615.5px;width:214px;height:1.2px;background:#5a5a5a;"></div>
<div class="r" style="left:0px;top:616.7px;width:214px;height:3.5px;background:#f0f0f0;"></div>
<div class="r" style="left:0px;top:620px;width:214px;height:4px;background:linear-gradient(#505050,#565a60 55%,#b4c6dc);"></div>
<div class="r" style="left:0px;top:624px;width:214px;height:436px;background:#e7eef8;"></div>
<div class="r" style="left:0px;top:624px;width:214px;height:20px;background:linear-gradient(#b4c8de,#d2e0f0);"></div>
<div class="r" style="left:0px;top:644px;width:211px;height:1.5px;background:#666c74;"></div>
<div class="t " style="left:-4.0px;top:626.5px;font-size:12px;line-height:16px;color:#1e1e1e;letter-spacing:-0.052px;">Project1 - Project Browser</div>
<div class="r" style="left:197px;top:628px;width:13px;height:13px;background:linear-gradient(#e6edf7,#c6d4e8);border:1px solid #8a9ab8;box-sizing:border-box;border-radius:2px;"></div>
<svg class="r" style="left:200px;top:631px;" width="8" height="8" viewBox="0 0 8 8"><path d="M1.800 1.800 L5.700 5.700 M5.700 1.800 L1.800 5.700" stroke="#3a3a3a" stroke-width="2.500" stroke-linecap="square"/><path d="M1.600 1.600 L5.900 5.900 M5.900 1.600 L1.600 5.900" stroke="#ffffff" stroke-width="1.250"/></svg>
<div class="r" style="left:0px;top:645.5px;width:211px;height:406.5px;background:#ffffff;"></div>
<div class="r" style="left:195px;top:645.5px;width:16px;height:406.5px;background:#f0f0f0;"></div>
<div class="r" style="left:195px;top:664.5px;width:14.5px;height:104px;background:linear-gradient(90deg,#f2f2f2,#dcdcdc 50%,#c6c6c6);border:1px solid #989898;box-sizing:border-box;border-radius:2px;"></div>
<svg class="r" style="left:198.5px;top:712px;" width="8" height="8" viewBox="0 0 8 8"><path d="M0 1.500 H7 M0 4 H7 M0 6.500 H7" stroke="#555"/></svg>
<svg class="r" style="left:199px;top:652px;" width="8" height="5" viewBox="0 0 8 5"><path d="M0 4.500 H7 L3.500 0.500Z" fill="#444"/></svg>
<svg class="r" style="left:199px;top:1043.5px;" width="8" height="5" viewBox="0 0 8 5"><path d="M0 0.500 H7 L3.500 4.500Z" fill="#444"/></svg>
<div class="r" style="left:0px;top:1052px;width:214px;height:7px;background:#f0f0f0;"></div>
<div class="r" style="left:18.5px;top:1052.5px;width:124px;height:8px;background:linear-gradient(#f4f4f4,#dcdcdc);border:1px solid #989898;box-sizing:border-box;border-radius:2px;"></div>
<div class="r" style="left:0;top:645px;width:195px;height:407px;overflow:hidden">
<div class="t " style="left:42.5px;top:2.0px;font-size:12px;line-height:16px;color:#000;letter-spacing:-0.286px;white-space:nowrap;">Views (all)</div>
<div class="t " style="left:46.2px;top:20.0px;font-size:12px;line-height:16px;color:#000;letter-spacing:-0.290px;white-space:nowrap;">Floor Plans</div>
<div class="t " style="left:66.2px;top:38.0px;font-size:12px;line-height:16px;color:#000;letter-spacing:-0.391px;white-space:nowrap;">Piso 0</div>
<div class="t " style="left:66.2px;top:56.0px;font-size:12px;line-height:16px;color:#000;letter-spacing:-0.391px;white-space:nowrap;">Piso 1</div>
<div class="t " style="left:66.2px;top:74.0px;font-size:12px;line-height:16px;color:#000;letter-spacing:-0.418px;white-space:nowrap;">Site</div>
<div class="t " style="left:46.2px;top:92.0px;font-size:12px;line-height:16px;color:#000;letter-spacing:-0.234px;white-space:nowrap;">Ceiling Plans</div>
<div class="t " style="left:66.2px;top:110.0px;font-size:12px;line-height:16px;color:#000;letter-spacing:-0.391px;white-space:nowrap;">Piso 0</div>
<div class="t " style="left:66.2px;top:128.0px;font-size:12px;line-height:16px;color:#000;letter-spacing:-0.391px;white-space:nowrap;">Piso 1</div>
<div class="t " style="left:46.2px;top:146.0px;font-size:12px;line-height:16px;color:#000;letter-spacing:-0.371px;white-space:nowrap;">3D Views</div>
<div class="t " style="left:46.2px;top:164.0px;font-size:12px;line-height:16px;color:#000;letter-spacing:-0.136px;white-space:nowrap;">Elevations (Building Elevation</div>
<div class="t " style="left:66.2px;top:182.0px;font-size:12px;line-height:16px;color:#000;letter-spacing:-0.108px;white-space:nowrap;">Alç. Lat. Direito</div>
<div class="t " style="left:66.2px;top:200.0px;font-size:12px;line-height:16px;color:#000;letter-spacing:-0.279px;white-space:nowrap;">Alç. Lat. Esquerdo</div>
<div class="t " style="left:66.2px;top:218.0px;font-size:12px;line-height:16px;color:#000;letter-spacing:-0.096px;white-space:nowrap;">Alç. Posterior</div>
<div class="r" style="left:63px;top:235px;width:76px;height:17.5px;background:#e2e2e2;"></div>
<div class="t " style="left:66.2px;top:236.0px;font-size:12px;line-height:16px;color:#000;letter-spacing:-0.427px;font-weight:bold;white-space:nowrap;">Alç. Principal</div>
<div class="t " style="left:42.5px;top:254.0px;font-size:12px;line-height:16px;color:#000;letter-spacing:-0.433px;white-space:nowrap;">Legends</div>
<div class="t " style="left:42.5px;top:272.0px;font-size:12px;line-height:16px;color:#000;letter-spacing:-0.119px;white-space:nowrap;">Schedules/Quantities</div>
<div class="t " style="left:42.5px;top:290.0px;font-size:12px;line-height:16px;color:#000;letter-spacing:-0.391px;white-space:nowrap;">Sheets (all)</div>
<div class="t " style="left:42.5px;top:308.0px;font-size:12px;line-height:16px;color:#000;letter-spacing:-0.461px;white-space:nowrap;">Families</div>
<div class="t " style="left:46.2px;top:326.0px;font-size:12px;line-height:16px;color:#000;letter-spacing:0.016px;white-space:nowrap;">Annotation Symbols</div>
<div class="t " style="left:66.2px;top:344.0px;font-size:12px;line-height:16px;color:#000;letter-spacing:-0.075px;white-space:nowrap;">A1 metric</div>
<div class="t " style="left:66.2px;top:362.0px;font-size:12px;line-height:16px;color:#000;letter-spacing:-0.130px;white-space:nowrap;">Elevation Mark Circle - Up</div>
<div class="t " style="left:66.2px;top:380.0px;font-size:12px;line-height:16px;color:#000;letter-spacing:-0.109px;white-space:nowrap;">Elevation Mark Pointer_Ci</div>
<div class="t " style="left:66.2px;top:398.0px;font-size:12px;line-height:16px;color:#000;letter-spacing:-0.242px;white-space:nowrap;">Elevation Mark Pointer_Sq</div>
<svg class="r" style="left:0;top:0" width="195" height="420" viewBox="0 0 195 420" fill="none"><defs><linearGradient id="eg" x1="0" y1="0" x2="1" y2="1"><stop offset="0" stop-color="#fff"/><stop offset="1" stop-color="#d6d6d6"/></linearGradient></defs><path d="M8.5 15 V318" stroke="#909090" stroke-dasharray="1 1" shape-rendering="crispEdges"/><path d="M28.5 17 V174" stroke="#909090" stroke-dasharray="1 1" shape-rendering="crispEdges"/><path d="M48.5 37 V84" stroke="#909090" stroke-dasharray="1 1" shape-rendering="crispEdges"/><path d="M48.5 109 V138" stroke="#909090" stroke-dasharray="1 1" shape-rendering="crispEdges"/><path d="M48.5 181 V246" stroke="#909090" stroke-dasharray="1 1" shape-rendering="crispEdges"/><path d="M28.5 323 V408" stroke="#909090" stroke-dasharray="1 1" shape-rendering="crispEdges"/><path d="M48.5 343 V408" stroke="#909090" stroke-dasharray="1 1" shape-rendering="crispEdges"/><path d="M13 11.5 H19" stroke="#909090" stroke-dasharray="1 1" shape-rendering="crispEdges"/><rect x="4.5" y="7.5" width="8" height="8" rx="1" fill="url(#eg)" stroke="#969696"/><path d="M6.5 11.5 H11" stroke="#2b3f9c"/><path d="M33 29.5 H43" stroke="#909090" stroke-dasharray="1 1" shape-rendering="crispEdges"/><rect x="24.5" y="25.5" width="8" height="8" rx="1" fill="url(#eg)" stroke="#969696"/><path d="M26.5 29.5 H31" stroke="#2b3f9c"/><path d="M49 47.5 H63" stroke="#909090" stroke-dasharray="1 1" shape-rendering="crispEdges"/><path d="M49 65.5 H63" stroke="#909090" stroke-dasharray="1 1" shape-rendering="crispEdges"/><path d="M49 83.5 H63" stroke="#909090" stroke-dasharray="1 1" shape-rendering="crispEdges"/><path d="M33 101.5 H43" stroke="#909090" stroke-dasharray="1 1" shape-rendering="crispEdges"/><rect x="24.5" y="97.5" width="8" height="8" rx="1" fill="url(#eg)" stroke="#969696"/><path d="M26.5 101.5 H31" stroke="#2b3f9c"/><path d="M49 119.5 H63" stroke="#909090" stroke-dasharray="1 1" shape-rendering="crispEdges"/><path d="M49 137.5 H63" stroke="#909090" stroke-dasharray="1 1" shape-rendering="crispEdges"/><path d="M33 155.5 H43" stroke="#909090" stroke-dasharray="1 1" shape-rendering="crispEdges"/><rect x="24.5" y="151.5" width="8" height="8" rx="1" fill="url(#eg)" stroke="#969696"/><path d="M26.5 155.5 H31" stroke="#2b3f9c"/><path d="M28.75 153.5 V158" stroke="#2b3f9c"/><path d="M33 173.5 H43" stroke="#909090" stroke-dasharray="1 1" shape-rendering="crispEdges"/><rect x="24.5" y="169.5" width="8" height="8" rx="1" fill="url(#eg)" stroke="#969696"/><path d="M26.5 173.5 H31" stroke="#2b3f9c"/><path d="M49 191.5 H63" stroke="#909090" stroke-dasharray="1 1" shape-rendering="crispEdges"/><path d="M49 209.5 H63" stroke="#909090" stroke-dasharray="1 1" shape-rendering="crispEdges"/><path d="M49 227.5 H63" stroke="#909090" stroke-dasharray="1 1" shape-rendering="crispEdges"/><path d="M49 245.5 H63" stroke="#909090" stroke-dasharray="1 1" shape-rendering="crispEdges"/><path d="M9 263.5 H19" stroke="#909090" stroke-dasharray="1 1" shape-rendering="crispEdges"/><path d="M9 281.5 H19" stroke="#909090" stroke-dasharray="1 1" shape-rendering="crispEdges"/><path d="M9 299.5 H19" stroke="#909090" stroke-dasharray="1 1" shape-rendering="crispEdges"/><path d="M13 317.5 H19" stroke="#909090" stroke-dasharray="1 1" shape-rendering="crispEdges"/><rect x="4.5" y="313.5" width="8" height="8" rx="1" fill="url(#eg)" stroke="#969696"/><path d="M6.5 317.5 H11" stroke="#2b3f9c"/><path d="M33 335.5 H43" stroke="#909090" stroke-dasharray="1 1" shape-rendering="crispEdges"/><rect x="24.5" y="331.5" width="8" height="8" rx="1" fill="url(#eg)" stroke="#969696"/><path d="M26.5 335.5 H31" stroke="#2b3f9c"/><path d="M53 353.5 H63" stroke="#909090" stroke-dasharray="1 1" shape-rendering="crispEdges"/><rect x="44.5" y="349.5" width="8" height="8" rx="1" fill="url(#eg)" stroke="#969696"/><path d="M46.5 353.5 H51" stroke="#2b3f9c"/><path d="M48.75 351.5 V356" stroke="#2b3f9c"/><path d="M53 371.5 H63" stroke="#909090" stroke-dasharray="1 1" shape-rendering="crispEdges"/><rect x="44.5" y="367.5" width="8" height="8" rx="1" fill="url(#eg)" stroke="#969696"/><path d="M46.5 371.5 H51" stroke="#2b3f9c"/><path d="M48.75 369.5 V374" stroke="#2b3f9c"/><path d="M53 389.5 H63" stroke="#909090" stroke-dasharray="1 1" shape-rendering="crispEdges"/><rect x="44.5" y="385.5" width="8" height="8" rx="1" fill="url(#eg)" stroke="#969696"/><path d="M46.5 389.5 H51" stroke="#2b3f9c"/><path d="M48.75 387.5 V392" stroke="#2b3f9c"/><path d="M53 407.5 H63" stroke="#909090" stroke-dasharray="1 1" shape-rendering="crispEdges"/><rect x="44.5" y="403.5" width="8" height="8" rx="1" fill="url(#eg)" stroke="#969696"/><path d="M46.5 407.5 H51" stroke="#2b3f9c"/><path d="M48.75 405.5 V410" stroke="#2b3f9c"/><g fill="none" stroke="#333"><path d="M21.500 6 V3.500 H24 M32 3.500 H34.500 V6 M34.500 14 V16.500 H32 M24 16.500 H21.500 V14"/><path d="M25 7.500 H32 L31 13.500 H24Z"/></g><g fill="none" stroke="#46505c"><rect x="20.500" y="254.5" width="15" height="15" rx="1" fill="#fff"/><rect x="21" y="255" width="14" height="2" fill="#8994a2" stroke="none"/><rect x="22.500" y="258" width="2.500" height="2.500" fill="#6e7884" stroke="none"/><circle cx="23.800" cy="264.5" r="1.500" fill="#8a949e" stroke="none"/><path d="M27 259 H33.500 M27 261.5 H30 M31 261.5 H33.500 M27 265 H33.500" stroke="#5a646e"/></g><g fill="none" stroke="#46505c"><rect x="20.500" y="275" width="14" height="11" fill="#fff"/><rect x="21" y="275.5" width="13" height="2" fill="#5e6a78" stroke="none"/><rect x="21" y="277.5" width="3" height="8" fill="#c4cad2" stroke="none"/><path d="M20.500 280.5 H34.500 M20.500 283.5 H34.500 M24.500 277.5 V286" stroke="#7a8490"/></g><g fill="none" stroke="#46505c"><path d="M20.500 291 H31.500 L35.500 295 V303 H20.500Z" fill="#fff"/><path d="M31.500 291 V295 H35.500" stroke="#7a8490"/><path d="M22.500 301 V294.5 H29.500 V301 H26.500 V298.5" stroke="#8594aa"/><path d="M33.500 297.5 V301" stroke="#8594aa"/></g><g stroke="#333" stroke-width="1.200" fill="#e8e8e8"><path d="M29.500 309.5 H34.500 V322.5 H21.500 V317.5 H29.500 Z"/><rect x="21.500" y="309.5" width="5.500" height="5.500"/></g></svg>
</div>
<svg class="r" style="left:0;top:0" width="1292" height="1059" viewBox="0 0 1292 1059" fill="none"><rect x="266" y="536" width="380" height="192" fill="#00e5fd"/><g stroke="#000" stroke-width="1" shape-rendering="crispEdges"><path d="M266.5 536 V728"/><path d="M329.5 536 V728"/><path d="M392.5 536 V728"/><path d="M455.5 536 V728"/><path d="M519.5 536 V728"/><path d="M582.5 536 V728"/><path d="M646.5 536 V728"/><path d="M266 536.500 H670 M266 728.500 H670 M266 570.500 H646"/><path d="M266.5 438 V525"/><path d="M329.5 438 V525"/><path d="M392.5 438 V525"/><path d="M455.5 438 V525"/><path d="M519.5 438 V525"/><path d="M582.5 438 V525"/><path d="M646.5 438 V525"/><path d="M250 454.500 H661"/></g><g stroke="#000" stroke-width="2"><path d="M256 465.500 L276.5 444.500"/><path d="M319 465.500 L339.5 444.500"/><path d="M382 465.500 L402.5 444.500"/><path d="M445.5 465.500 L466 444.500"/><path d="M509.5 465.500 L530 444.500"/><path d="M572 465.500 L592.5 444.500"/><path d="M636 465.500 L656.5 444.500"/></g><rect x="741" y="536" width="387" height="192" fill="#41ebdf"/><g shape-rendering="crispEdges"><path d="M703 536.500 H1128 M703 728.500 H1128 M1140 536.500 H1249 M1140 728.500 H1249 M1283 536.500 H1292 M1283 728.500 H1292" stroke="#000"/><path d="M741 570.500 H1128" stroke="#1d5a4e"/><path d="M741.5 536 V728" stroke="#e8952a"/><path d="M796.5 536 V728" stroke="#e8952a"/><path d="M867.5 536 V728" stroke="#e8952a"/><path d="M906.5 536 V728" stroke="#e8952a"/><path d="M993.5 536 V728" stroke="#e8952a"/><path d="M1017.5 536 V728" stroke="#e8952a"/><path d="M1119.5 536 V728" stroke="#e8952a"/><path d="M1127.5 536 V728" stroke="#e8952a"/><path d="M796.5 536 V728" stroke="#1d5a4e" stroke-dasharray="21.500 22.500" stroke-dashoffset="-20"/><path d="M867.5 536 V728" stroke="#1d5a4e" stroke-dasharray="21.500 22.500" stroke-dashoffset="-20"/><path d="M906.5 536 V728" stroke="#1d5a4e" stroke-dasharray="21.500 22.500" stroke-dashoffset="-20"/><path d="M993.5 536 V728" stroke="#1d5a4e" stroke-dasharray="21.500 22.500" stroke-dashoffset="-20"/><path d="M1017.5 536 V728" stroke="#1d5a4e" stroke-dasharray="21.500 22.500" stroke-dashoffset="-20"/><path d="M1119.5 536 V728" stroke="#1d5a4e" stroke-dasharray="21.500 22.500" stroke-dashoffset="-20"/><path d="M740.5 594 V598 M740.5 601 V615 M740.5 640 V653 M740.5 656 V659 M740.5 684 V690 M740.5 693 V703" stroke="#222"/><path d="M1128.5 594 V598 M1128.5 601 V615 M1128.5 640 V653 M1128.5 656 V659 M1128.5 684 V690 M1128.5 693 V703" stroke="#222"/><path d="M812 536.5 H844 M889 536.5 H922 M1031 536.5 H1063 M1108 536.5 H1128" stroke="#e8952a"/><path d="M822 536.5 H825 M831 536.5 H834" stroke="#444"/><path d="M812 728.5 H844 M889 728.5 H922 M1031 728.5 H1063 M1108 728.5 H1128" stroke="#e8952a"/><path d="M822 728.5 H825 M831 728.5 H834" stroke="#444"/><path d="M741.5 429 V525" stroke="#000"/><path d="M796.5 429 V525" stroke="#000"/><path d="M867.5 432 V525" stroke="#000"/><path d="M906.5 432 V525" stroke="#000"/><path d="M993.5 432 V525" stroke="#000"/><path d="M1017.5 432 V525" stroke="#000"/><path d="M1119.5 429 V525" stroke="#000"/><path d="M1127.5 431 V525" stroke="#000"/><path d="M725 444.500 H1143" stroke="#000"/></g><g stroke="#000" stroke-width="2"><path d="M731 455 L751.5 434"/><path d="M786 455 L806.5 434"/><path d="M857 455 L877.5 434"/><path d="M896.5 455 L917 434"/><path d="M983 455 L1003.5 434"/><path d="M1007.5 455 L1028 434"/><path d="M1109 455 L1129.5 434"/><path d="M1117 455 L1137.5 434"/></g><g transform="translate(771 484)"><path d="M1.800 -1 V-4 Q1.800 -6.200 4.200 -6.200 Q6.600 -6.200 6.600 -4 V-2.500" fill="none" stroke="#1a44b8" stroke-width="2.600"/><path d="M1.800 -1 V-4 Q1.800 -6.200 4.200 -6.200 Q6.600 -6.200 6.600 -4 V-2.800" fill="none" stroke="#e8f6fc" stroke-width="0.900"/><rect x="-6.500" y="-1.500" width="11" height="9" fill="#b4ecf2" stroke="#1a44b8"/><path d="M-4.500 0 V6" stroke="#6f9fd0" stroke-dasharray="1 1"/></g><g transform="translate(833.5 484)"><path d="M1.800 -1 V-4 Q1.800 -6.200 4.200 -6.200 Q6.600 -6.200 6.600 -4 V-2.500" fill="none" stroke="#1a44b8" stroke-width="2.600"/><path d="M1.800 -1 V-4 Q1.800 -6.200 4.200 -6.200 Q6.600 -6.200 6.600 -4 V-2.800" fill="none" stroke="#e8f6fc" stroke-width="0.900"/><rect x="-6.500" y="-1.500" width="11" height="9" fill="#b4ecf2" stroke="#1a44b8"/><path d="M-4.500 0 V6" stroke="#6f9fd0" stroke-dasharray="1 1"/></g><g transform="translate(889 484)"><path d="M1.800 -1 V-4 Q1.800 -6.200 4.200 -6.200 Q6.600 -6.200 6.600 -4 V-2.500" fill="none" stroke="#1a44b8" stroke-width="2.600"/><path d="M1.800 -1 V-4 Q1.800 -6.200 4.200 -6.200 Q6.600 -6.200 6.600 -4 V-2.800" fill="none" stroke="#e8f6fc" stroke-width="0.900"/><rect x="-6.500" y="-1.500" width="11" height="9" fill="#b4ecf2" stroke="#1a44b8"/><path d="M-4.500 0 V6" stroke="#6f9fd0" stroke-dasharray="1 1"/></g><g transform="translate(951.5 484)"><path d="M1.800 -1 V-4 Q1.800 -6.200 4.200 -6.200 Q6.600 -6.200 6.600 -4 V-2.500" fill="none" stroke="#1a44b8" stroke-width="2.600"/><path d="M1.800 -1 V-4 Q1.800 -6.200 4.200 -6.200 Q6.600 -6.200 6.600 -4 V-2.800" fill="none" stroke="#e8f6fc" stroke-width="0.900"/><rect x="-6.500" y="-1.500" width="11" height="9" fill="#b4ecf2" stroke="#1a44b8"/><path d="M-4.500 0 V6" stroke="#6f9fd0" stroke-dasharray="1 1"/></g><g transform="translate(1007.5 484)"><path d="M1.800 -1 V-4 Q1.800 -6.200 4.200 -6.200 Q6.600 -6.200 6.600 -4 V-2.500" fill="none" stroke="#1a44b8" stroke-width="2.600"/><path d="M1.800 -1 V-4 Q1.800 -6.200 4.200 -6.200 Q6.600 -6.200 6.600 -4 V-2.800" fill="none" stroke="#e8f6fc" stroke-width="0.900"/><rect x="-6.500" y="-1.500" width="11" height="9" fill="#b4ecf2" stroke="#1a44b8"/><path d="M-4.500 0 V6" stroke="#6f9fd0" stroke-dasharray="1 1"/></g><g transform="translate(1070 484)"><path d="M1.800 -1 V-4 Q1.800 -6.200 4.200 -6.200 Q6.600 -6.200 6.600 -4 V-2.500" fill="none" stroke="#1a44b8" stroke-width="2.600"/><path d="M1.800 -1 V-4 Q1.800 -6.200 4.200 -6.200 Q6.600 -6.200 6.600 -4 V-2.800" fill="none" stroke="#e8f6fc" stroke-width="0.900"/><rect x="-6.500" y="-1.500" width="11" height="9" fill="#b4ecf2" stroke="#1a44b8"/><path d="M-4.500 0 V6" stroke="#6f9fd0" stroke-dasharray="1 1"/></g><g transform="translate(1124.5 484)"><path d="M1.800 -1 V-4 Q1.800 -6.200 4.200 -6.200 Q6.600 -6.200 6.600 -4 V-2.500" fill="none" stroke="#1a44b8" stroke-width="2.600"/><path d="M1.800 -1 V-4 Q1.800 -6.200 4.200 -6.200 Q6.600 -6.200 6.600 -4 V-2.800" fill="none" stroke="#e8f6fc" stroke-width="0.900"/><rect x="-6.500" y="-1.500" width="11" height="9" fill="#b4ecf2" stroke="#1a44b8"/><path d="M-4.500 0 V6" stroke="#6f9fd0" stroke-dasharray="1 1"/></g><g fill="#82afee" stroke="#5a78a8" stroke-width="0.900"><circle cx="741.5" cy="485.500" r="3"/><circle cx="741.5" cy="525" r="3"/><circle cx="796.5" cy="485.500" r="3"/><circle cx="796.5" cy="525" r="3"/><circle cx="867.5" cy="485.500" r="3"/><circle cx="867.5" cy="525" r="3"/><circle cx="907" cy="485.500" r="3"/><circle cx="907" cy="525" r="3"/><circle cx="993.5" cy="485.500" r="3"/><circle cx="993.5" cy="525" r="3"/><circle cx="1018" cy="485.500" r="3"/><circle cx="1018" cy="525" r="3"/><circle cx="1119.5" cy="485.500" r="3"/><circle cx="1119.5" cy="525" r="3"/><circle cx="1127.5" cy="485.500" r="3"/><circle cx="1127.5" cy="525" r="3"/><circle cx="769" cy="432.500" r="3"/><circle cx="832" cy="432.500" r="3"/><circle cx="887" cy="432.500" r="3"/><circle cx="950.5" cy="432.500" r="3"/><circle cx="1005.5" cy="432.500" r="3"/><circle cx="1068.5" cy="432.500" r="3"/><circle cx="1123.5" cy="432.500" r="3"/></g></svg>
<div class="t " style="left:281.0px;top:415.1px;font-size:23.5px;line-height:27.5px;color:#000;letter-spacing:-0.727px;">EQ</div>
<div class="t " style="left:344.0px;top:415.1px;font-size:23.5px;line-height:27.5px;color:#000;letter-spacing:-0.727px;">EQ</div>
<div class="t " style="left:406.5px;top:415.1px;font-size:23.5px;line-height:27.5px;color:#000;letter-spacing:-0.727px;">EQ</div>
<div class="t " style="left:470.2px;top:415.1px;font-size:23.5px;line-height:27.5px;color:#000;letter-spacing:-0.727px;">EQ</div>
<div class="t " style="left:533.1px;top:415.1px;font-size:23.5px;line-height:27.5px;color:#000;letter-spacing:-0.727px;">EQ</div>
<div class="t " style="left:595.7px;top:415.1px;font-size:23.5px;line-height:27.5px;color:#000;letter-spacing:-0.727px;">EQ</div>
<div class="t " style="left:745.0px;top:406.0px;font-size:23px;line-height:27px;color:#0a34c8;letter-spacing:0.380px;">0.80</div>
<div class="t " style="left:809.7px;top:406.0px;font-size:23px;line-height:27px;color:#0a34c8;letter-spacing:0.380px;">1.03</div>
<div class="t " style="left:863.7px;top:406.0px;font-size:23px;line-height:27px;color:#0a34c8;letter-spacing:0.380px;">0.57</div>
<div class="t " style="left:928.0px;top:406.0px;font-size:23px;line-height:27px;color:#0a34c8;letter-spacing:0.380px;">1.26</div>
<div class="t " style="left:981.6px;top:406.0px;font-size:23px;line-height:27px;color:#0a34c8;letter-spacing:0.380px;">0.34</div>
<div class="t " style="left:1046.0px;top:406.0px;font-size:23px;line-height:27px;color:#0a34c8;letter-spacing:0.380px;">1.49</div>
<div class="t " style="left:1099.7px;top:406.0px;font-size:23px;line-height:27px;color:#0a34c8;letter-spacing:0.605px;">0.11</div>
<div class="r" style="left:335px;top:353px;width:190.5px;height:59.5px;background:#fff;border:6px solid #fe0000;box-sizing:border-box;border-radius:8px;box-shadow:2px 2px 2px rgba(0,0,0,.8);"></div>
<div class="t " style="left:352.5px;top:370.5px;font-size:25px;line-height:29px;color:#fe0000;letter-spacing:0.607px;">Curtain Wall</div>
<div class="r" style="left:852px;top:330.5px;width:225px;height:60.5px;background:#fff;border:6px solid #fe0000;box-sizing:border-box;border-radius:8px;box-shadow:2px 2px 2px rgba(0,0,0,.8);"></div>
<div class="t " style="left:869.5px;top:348.7px;font-size:25px;line-height:29px;color:#fe0000;letter-spacing:0.290px;">Exterior Glazing</div>
<div class="r" style="left:816px;top:790px;width:468px;height:210px;background:linear-gradient(#d9e6f5,#c0d5ec 18%,#b8d0e9);border:1px solid #3a3f48;box-sizing:border-box;border-radius:7px;box-shadow:1px 2px 5px rgba(0,0,0,.45), inset 0 0 0 1px #e8f1fa;"></div>
<div class="t " style="left:824.3px;top:796.8px;font-size:12px;line-height:16px;color:#000;letter-spacing:0.003px;">Autodesk Revit Architecture 2012</div>
<div class="r" style="left:823px;top:818.5px;width:453.5px;height:174.5px;background:#f0f0f0;border:1px solid #6e7a8a;box-sizing:border-box;"></div>
<div class="r" style="left:835px;top:826.5px;width:430.5px;height:109.5px;border:1px solid #d5dfe5;box-sizing:border-box;border-radius:3px;"></div>
<div class="r" style="left:841px;top:821px;width:126px;height:12px;background:#f0f0f0;"></div>
<div class="t " style="left:843.5px;top:820.0px;font-size:11px;line-height:15px;color:#000;letter-spacing:-0.055px;">Error - cannot be ignored</div>
<div class="r" style="left:844px;top:836.5px;width:412.5px;height:62px;background:#fff;border:1px solid #abc0d6;box-sizing:border-box;"></div>
<div class="r" style="left:1239px;top:838px;width:16px;height:58.5px;background:#f0f0f0;"></div>
<div class="t " style="left:849.5px;top:838.8px;font-size:11px;line-height:15px;color:#000;letter-spacing:-0.054px;white-space:pre;">Equality constraints are not satisfied.  The action either violates a locked</div>
<div class="t " style="left:849.5px;top:852.1px;font-size:11px;line-height:15px;color:#000;letter-spacing:-0.030px;">constraint or tries to modify a sketch based object outside of the sketch mode.</div>
<svg class="r" style="left:1244px;top:845px;" width="7" height="4" viewBox="0 0 7 4"><path d="M0 3.500 H6 L3 0Z" fill="#9a9a9a"/></svg>
<svg class="r" style="left:1244px;top:888px;" width="7" height="4" viewBox="0 0 7 4"><path d="M0 0 H6 L3 3.500Z" fill="#9a9a9a"/></svg>
<div class="r" style="left:996px;top:906px;width:78.5px;height:21px;background:linear-gradient(#f4f4f4,#ececec 48%,#dddddd 52%,#d2d2d2);border:1px solid #707070;box-sizing:border-box;border-radius:3px;"></div>
<div class="t " style="left:1021.2px;top:909.6px;font-size:11px;line-height:15px;color:#000;letter-spacing:-0.383px;">Show</div>
<div class="r" style="left:1083px;top:906px;width:73px;height:21px;background:#f4f4f4;border:1px solid #c0c4c8;box-sizing:border-box;border-radius:3px;"></div>
<div class="t " style="left:1095.5px;top:909.6px;font-size:11px;line-height:15px;color:#9c9c9c;letter-spacing:-0.056px;">More Info</div>
<div class="r" style="left:1164.5px;top:906px;width:90.5px;height:21px;background:linear-gradient(#f4f4f4,#ececec 48%,#dddddd 52%,#d2d2d2);border:1px solid #707070;box-sizing:border-box;border-radius:3px;"></div>
<div class="t " style="left:1181.2px;top:909.6px;font-size:11px;line-height:15px;color:#000;letter-spacing:0.194px;">Expand &gt;&gt;</div>
<div class="r" style="left:836px;top:961px;width:163px;height:21px;background:linear-gradient(#f4f4f4,#ececec 48%,#dddddd 52%,#d2d2d2);border:1px solid #707070;box-sizing:border-box;border-radius:3px;"></div>
<div class="t " style="left:868.0px;top:964.6px;font-size:11px;line-height:15px;color:#000;letter-spacing:-0.149px;">Remove Constraints</div>
<div class="r" style="left:1080px;top:959px;width:88px;height:22px;background:#f4f4f4;border:1px solid #c0c4c8;box-sizing:border-box;border-radius:3px;"></div>
<div class="t " style="left:1116.0px;top:963.1px;font-size:11px;line-height:15px;color:#9c9c9c;letter-spacing:-0.953px;">OK</div>
<div class="r" style="left:1176px;top:959px;width:88px;height:22px;background:linear-gradient(#f4f4f4,#ececec 48%,#dddddd 52%,#d2d2d2);border:1px solid #707070;box-sizing:border-box;border-radius:3px;"></div>
<div class="t " style="left:1203.0px;top:963.1px;font-size:11px;line-height:15px;color:#000;letter-spacing:-0.375px;">Cancel</div>
<div class="r" style="left:223px;top:1052px;width:1069px;height:7px;background:#f0f0f0;"></div>
<div class="r" style="left:467px;top:1052px;width:825px;height:7px;background:#e9e9e9;"></div>
<div class="t " style="left:246.0px;top:1055.0px;font-size:12px;line-height:16px;color:#000;letter-spacing:-0.096px;">1 : 100</div>
<div class="r" style="left:303px;top:1053.5px;width:15px;height:8px;background:#f4f4f4;border:1px solid #555;box-sizing:border-box;"></div>
<div class="r" style="left:325px;top:1054.5px;width:13px;height:6px;background:#fff;transform:skewX(-30deg);border:1.500px solid #3a6cc8;box-sizing:border-box;"></div>
<div class="r" style="left:346px;top:1053.5px;width:11px;height:7px;background:#f6c040;border-radius:6px 6px 0 0;border:1px solid #e08a10;box-sizing:border-box;"></div>
<div class="r" style="left:367px;top:1054px;width:10px;height:6px;border:1.500px solid #3a7ad8;border-bottom:none;border-radius:5px 5px 0 0;box-sizing:border-box;"></div>
<div class="r" style="left:389px;top:1054.5px;width:11px;height:5px;background:#dfe8f8;border:1.500px solid #3a6cc8;border-bottom:none;box-sizing:border-box;"></div>
<div class="r" style="left:410px;top:1054.5px;width:11px;height:5px;background:#dfe8f8;border:1.500px solid #4a7cd0;border-bottom:none;box-sizing:border-box;"></div>
<div class="r" style="left:429px;top:1054px;width:14px;height:5px;border-top:2px solid #444;border-radius:6px 6px 0 0;box-sizing:border-box;"></div>
<div class="r" style="left:453px;top:1055px;width:5px;height:4px;border:1.500px solid #3a7ad8;border-bottom:none;border-radius:3px 3px 0 0;box-sizing:border-box;"></div>
<svg class="r" style="left:473px;top:1054px;" width="5" height="6" viewBox="0 0 5 6"><path d="M4 0.500 L1 3.500 L4 6.500" stroke="#222" stroke-width="1.200" fill="none"/></svg>
<div class="r" style="left:906.5px;top:1053px;width:12px;height:8px;background:#f6f6f6;border:1px solid #8a8a8a;box-sizing:border-box;border-radius:2px;"></div>
</body></html>
